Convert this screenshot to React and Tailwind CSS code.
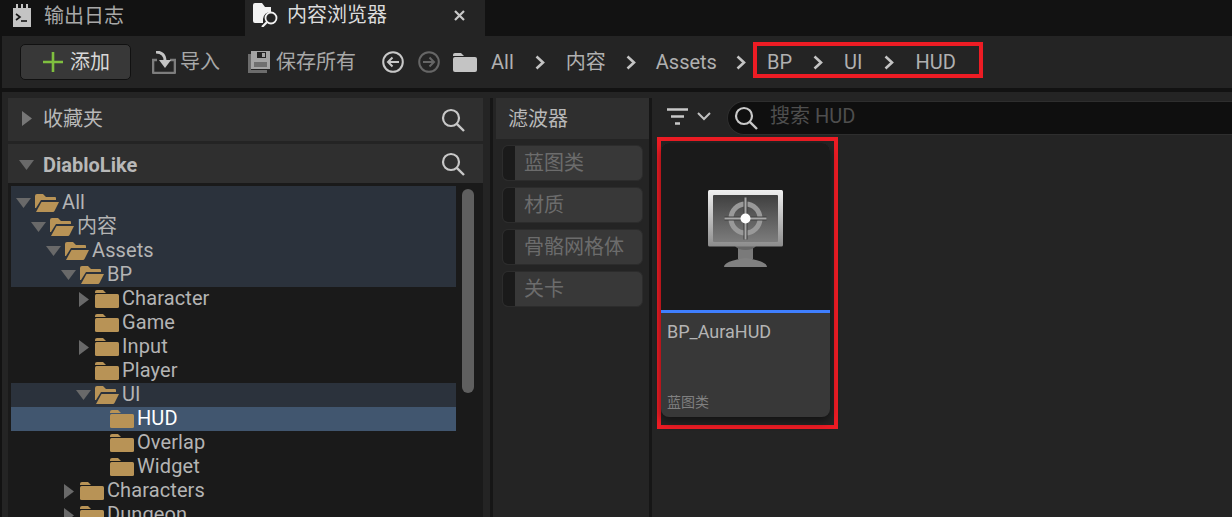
import React from "react";

const tree = [
  { name: "All", depth: 0, arrow: "down", open: true },
  { name: "内容", depth: 1, arrow: "down", open: true },
  { name: "Assets", depth: 2, arrow: "down", open: true },
  { name: "BP", depth: 3, arrow: "down", open: true },
  { name: "Character", depth: 4, arrow: "right" },
  { name: "Game", depth: 4 },
  { name: "Input", depth: 4, arrow: "right" },
  { name: "Player", depth: 4 },
  { name: "UI", depth: 4, arrow: "down", open: true, band: true },
  { name: "HUD", depth: 5, selected: true },
  { name: "Overlap", depth: 5 },
  { name: "Widget", depth: 5 },
  { name: "Characters", depth: 3, arrow: "right" },
  { name: "Dungeon", depth: 3, arrow: "right" },
];

const filters = ["蓝图类", "材质", "骨骼网格体", "关卡"];

const Chevron = () => (
  <svg width="10" height="15" viewBox="0 0 10 15" className="shrink-0">
    <path d="M1.5 1.5 L8 7.5 L1.5 13.5" fill="none" stroke="#c4c4c4" strokeWidth="2.6" />
  </svg>
);

const SearchIcon = ({ color = "#c8c8c8" }) => (
  <svg width="24" height="24" viewBox="0 0 24 24" className="shrink-0">
    <circle cx="10" cy="10" r="8" fill="none" stroke={color} strokeWidth="2.2" />
    <path d="M15.8 15.8 L23 23" stroke={color} strokeWidth="2.4" />
  </svg>
);

const Arrow = ({ dir }) =>
  dir === "down" ? (
    <svg width="15" height="10" viewBox="0 0 15 10" className="shrink-0">
      <path d="M0 0 H15 L7.5 10 Z" fill="#696969" />
    </svg>
  ) : (
    <svg width="15" height="15" viewBox="0 0 15 15" className="shrink-0">
      <path d="M3 0 L13 7.5 L3 15 Z" fill="#696969" />
    </svg>
  );

const Folder = ({ open, color = "#b89356" }) =>
  open ? (
    <svg width="24" height="18" viewBox="0 0 24 18" className="shrink-0">
      <path d="M0 2 Q0 0 2 0 H8 L11 3 H20 Q21 3 21 4 V6 H6 L1 14 H0 Z" fill={color} />
      <path d="M6.5 8 H24 L19.5 17 Q19 18 18 18 H1 Z" fill={color} />
    </svg>
  ) : (
    <svg width="24" height="18" viewBox="0 0 24 18" className="shrink-0">
      <path d="M0 2 Q0 0 2 0 H8 L11 3 H0 Z" fill={color} />
      <rect x="0" y="4" width="24" height="14" rx="1.5" fill={color} />
    </svg>
  );

const TreeRow = ({ item }) => (
  <div
    className={`relative flex items-center h-6 ${item.selected ? "bg-[#41566f] text-white" : "text-[#b4b4b4]"} ${item.band ? "bg-[#2b323c]" : ""}`}
    style={{ paddingLeft: 5 + item.depth * 15 }}
  >
    <span className="flex w-[19px] shrink-0 items-center">{item.arrow && <Arrow dir={item.arrow} />}</span>
    <Folder open={item.open} />
    <span className="mb-[2px] ml-[3px] text-[20px] leading-6 tracking-[0.1px] whitespace-nowrap">{item.name}</span>
  </div>
);

const PanelHeader = ({ label, bold, h }) => (
  <div className={`flex items-center justify-between bg-[#2f2f2f] pl-[11px] pr-[18px] ${h}`}>
    <div className={`flex items-center gap-[9px] ${bold ? "mt-[2px]" : "mb-[2px]"}`}>
      {bold ? <Arrow dir="down" /> : <svg width="15" height="15" viewBox="0 0 15 15"><path d="M3 0 L13 7.5 L3 15 Z" fill="#777" /></svg>}
      <span className={`text-[20px] text-[#b8b8b8] ${bold ? "font-bold" : ""}`}>{label}</span>
    </div>
    <SearchIcon />
  </div>
);

const OutputIcon = () => (
  <svg width="18" height="24" viewBox="0 0 18 24" className="shrink-0">
    <path d="M0 4 H3 V0 H5 V4 H8 V0 H10 V4 H13 V0 H15 V4 H18 V23 H0 Z" fill="#c4c4c4" />
    <path d="M3 10 L7 13 L3 16" fill="none" stroke="#151515" strokeWidth="1.6" />
    <path d="M8 17 H14" stroke="#151515" strokeWidth="1.6" />
  </svg>
);

const BrowserIcon = () => (
  <svg width="26" height="24" viewBox="0 0 26 24" className="shrink-0">
    <path d="M0 2 Q0 0 2 0 H9 L12 4 H18 V9 Q11 9 10 16 L10 20 H2 Q0 20 0 18 Z" fill="#f2f2f2" />
    <circle cx="18" cy="15" r="5.5" fill="none" stroke="#f2f2f2" strokeWidth="1.8" />
    <path d="M14 19 L9 24" stroke="#f2f2f2" strokeWidth="2.2" />
  </svg>
);

const ImportIcon = () => (
  <svg width="24" height="23" viewBox="0 0 24 23" className="shrink-0">
    <path d="M5 9 H1 V21 Q1 22 2 22 H22 Q23 22 23 21 V9 H18" fill="none" stroke="#7d7d7d" strokeWidth="2.6" />
    <path d="M4 1 Q13 1 13 10" fill="none" stroke="#c4c4c4" strokeWidth="2.8" />
    <path d="M7 9 H19 L13 17 Z" fill="#c4c4c4" />
  </svg>
);

const SaveIcon = () => (
  <svg width="22" height="22" viewBox="0 0 22 22" className="shrink-0">
    <path d="M0 3 V22 H19 V19 H3 V3 Z" fill="#6c6c6c" />
    <path d="M3 0 H22 V18 H3 Z" fill="#a4a4a4" />
    <rect x="9" y="1" width="9" height="6" fill="#242424" />
    <rect x="14" y="2" width="3" height="4" fill="#a4a4a4" />
    <rect x="6" y="11" width="13" height="5" fill="#6f6f6f" />
  </svg>
);

const CircleArrow = ({ flip, color }) => (
  <svg width="22" height="22" viewBox="0 0 22 22" className={`shrink-0 ${flip ? "-scale-x-100" : ""}`}>
    <circle cx="11" cy="11" r="9.8" fill="none" stroke={color} strokeWidth="2" />
    <path d="M17 11 H6 M10.5 6.5 L6 11 L10.5 15.5" fill="none" stroke={color} strokeWidth="2" />
  </svg>
);

const MonitorIcon = () => (
  <svg width="75" height="77" viewBox="0 0 75 77">
    <defs>
      <linearGradient id="bezel" x1="0" y1="0" x2="0" y2="1">
        <stop offset="0" stopColor="#f0f0f0" />
        <stop offset="1" stopColor="#8c8c8c" />
      </linearGradient>
      <linearGradient id="screen" x1="0" y1="0" x2="0" y2="1">
        <stop offset="0" stopColor="#404040" />
        <stop offset="1" stopColor="#7c7c7c" />
      </linearGradient>
    </defs>
    <path d="M30 56 H45 V69 H30 Z" fill="#7a7a7a" />
    <path d="M27 56 H48 Q45 60 37.5 60 Q30 60 27 56 Z" fill="#666" />
    <path d="M16 77 Q16 71 37.5 68 Q59 71 59 77 Z" fill="#808080" />
    <rect x="0" y="0" width="75" height="56.5" rx="1.5" fill="url(#bezel)" />
    <rect x="5" y="5" width="65" height="47" rx="1" fill="url(#screen)" />
    <circle cx="37.5" cy="28.5" r="14.5" fill="none" stroke="#999" strokeWidth="5" />
    <path d="M37.5 7.5 V49.5 M16.5 28.5 H58.5" stroke="#3f3f3f" strokeWidth="4" />
    <path d="M37.5 7.5 V49.5 M16.5 28.5 H58.5" stroke="#a8a8a8" strokeWidth="2" />
    <circle cx="37.5" cy="28.5" r="5" fill="#fff" />
  </svg>
);

export default function App() {
  const openRows = tree.slice(0, 4);
  const restRows = tree.slice(4);

  return (
    <div className="flex h-[517px] w-[1232px] flex-col overflow-hidden bg-[#121212] font-[Roboto,'Noto_Sans_CJK_SC',sans-serif]">
      {/* tabs */}
      <div className="flex h-9 shrink-0">
        <div className="flex w-[245px] items-start gap-[13px] pl-[13px] pt-[4px]">
          <OutputIcon />
          <span className="text-[20px] leading-6 text-[#a8a8a8]">输出日志</span>
        </div>
        <div className="flex w-[240px] items-start bg-[#242424] pl-[8px] pt-[3px]">
          <BrowserIcon />
          <span className="ml-[8px] text-[20px] leading-6 text-[#dcdcdc]">内容浏览器</span>
          <svg width="11" height="11" viewBox="0 0 11 11" className="ml-[67px] mt-[7px] shrink-0">
            <path d="M1 1 L10 10 M10 1 L1 10" stroke="#c8c8c8" strokeWidth="2.2" />
          </svg>
        </div>
      </div>

      {/* toolbar */}
      <div className="ml-[2px] flex h-[52px] shrink-0 items-center bg-[#242424] pl-[18px] text-[20px] text-[#a8a8a8]">
        <div className="flex h-9 w-[111px] items-center rounded-[5px] border border-[#111] bg-[#383838] pl-[22px]">
          <svg width="20" height="20" viewBox="0 0 20 20" className="shrink-0">
            <path d="M10 0 V20 M0 10 H20" stroke="#7fbf3f" strokeWidth="2.6" />
          </svg>
          <span className="ml-[7px] text-[#d8d8d8]">添加</span>
        </div>
        <div className="ml-[21px]"><ImportIcon /></div>
        <span className="ml-[4px]">导入</span>
        <div className="ml-[28px]"><SaveIcon /></div>
        <span className="ml-[6px]">保存所有</span>
        <div className="ml-[26px]"><CircleArrow color="#c8c8c8" /></div>
        <div className="ml-[14px]"><CircleArrow flip color="#666" /></div>
        <svg width="24" height="19" viewBox="0 0 24 19" className="ml-[13px] shrink-0">
          <path d="M0 2 Q0 0 2 0 H8 L11 3 H0 Z" fill="#c4c4c4" />
          <rect x="0" y="4" width="24" height="15" rx="2" fill="#c4c4c4" />
        </svg>
        <div className="ml-[14px] flex items-center gap-[20px] text-[#b0b0b0]">
          <span>All</span>
          <span className="ml-px flex"><Chevron /></span>
          <span className="ml-px">内容</span>
          <Chevron />
          <span>Assets</span>
          <span className="-ml-px flex"><Chevron /></span>
        </div>
        <div className="mb-1 ml-[7px] flex h-9 w-[230px] items-center gap-[21px] border-4 border-[#ed1c24] pl-[10px] pt-1 text-[#b0b0b0]">
          <span>BP</span>
          <Chevron />
          <span>UI</span>
          <span className="ml-px flex"><Chevron /></span>
          <span>HUD</span>
        </div>
      </div>

      {/* body */}
      <div className="ml-[2px] mt-1 flex min-h-0 flex-1 bg-[#242424] pl-[6px] pt-[6px]">
        {/* sources */}
        <div className="flex w-[475px] shrink-0 flex-col gap-[3px]">
          <PanelHeader label="收藏夹" h="h-[43px]" />
          <div className="flex min-h-0 flex-1 flex-col">
            <PanelHeader label="DiabloLike" bold h="h-[39px]" />
            <div className="flex min-h-0 flex-1 bg-[#1a1a1a] pl-[3px]">
              <div className="w-[445px] shrink-0 pt-[3px]">
                <div className="bg-[#2b323c] pt-[5px]">
                  {openRows.map((item) => <TreeRow key={item.name} item={item} />)}
                </div>
                {restRows.map((item) => <TreeRow key={item.name} item={item} />)}
              </div>
              <div className="ml-[6px] mt-[6px] h-[204px] w-3 rounded-full bg-[#5f5f5f]" />
            </div>
          </div>
        </div>

        <div className="ml-[7px] w-[3px] shrink-0 bg-[#161616]" />

        {/* filters */}
        <div className="ml-[3px] flex w-[153px] shrink-0 flex-col">
          <div className="flex h-[41px] items-center bg-[#2f2f2f] pl-3 text-[20px] text-[#b8b8b8]">滤波器</div>
          <div className="flex flex-col gap-[6px] px-[6px] pt-[6px]">
            {filters.map((f) => (
              <div key={f} className="flex h-9 overflow-hidden rounded-[6px] border border-[#2c2c2c] bg-[#383838]">
                <div className="w-[12px] shrink-0 bg-[#1a1a1a]" />
                <span className="pl-[9px] text-[20px] leading-[34px] text-[#6c6c6c] whitespace-nowrap">{f}</span>
              </div>
            ))}
          </div>
        </div>

        <div className="w-[3px] shrink-0 bg-[#161616]" />

        {/* assets */}
        <div className="flex min-w-0 flex-1 flex-col">
          <div className="flex h-[39px] shrink-0 items-center pl-[15px]">
            <svg width="21" height="17" viewBox="0 0 21 17" className="mb-[2px] shrink-0">
              <path d="M0 1.5 H21 M4 8.5 H17 M8 15.5 H13" stroke="#c8c8c8" strokeWidth="2.6" />
            </svg>
            <svg width="14" height="9" viewBox="0 0 14 9" className="mb-[3px] ml-[9px] shrink-0">
              <path d="M1 1 L7 7 L13 1" fill="none" stroke="#c0c0c0" strokeWidth="2" />
            </svg>
            <div className="ml-4 flex h-[34px] flex-1 items-center rounded-l-full border border-r-0 border-[#2e2e2e] bg-[#0f0f0f] pl-[6px]">
              <SearchIcon />
              <span className="mb-[3px] ml-[12px] text-[20px] text-[#4e4e4e]">搜索 HUD</span>
            </div>
          </div>
          <div className="ml-[5px] h-[292px] w-[181px] shrink-0 border-4 border-[#ed1c24] pb-2 pr-1 pt-[2px]">
            <div className="flex h-full flex-col overflow-hidden rounded-[8px] bg-[#383838] shadow-[0_4px_8px_rgba(0,0,0,0.5)]">
              <div className="flex h-[167px] shrink-0 items-start justify-center bg-[#1a1a1a] pt-[47px]">
                <MonitorIcon />
              </div>
              <div className="h-[3px] shrink-0 bg-[#3f7fff]" />
              <div className="flex flex-1 flex-col justify-between px-[6px] pb-[5px] pt-[7px]">
                <span className="text-[18px] leading-6 text-[#b4b4b4]">BP_AuraHUD</span>
                <span className="text-[14px] leading-5 text-[#808080]">蓝图类</span>
              </div>
            </div>
          </div>
        </div>
      </div>
    </div>
  );
}
